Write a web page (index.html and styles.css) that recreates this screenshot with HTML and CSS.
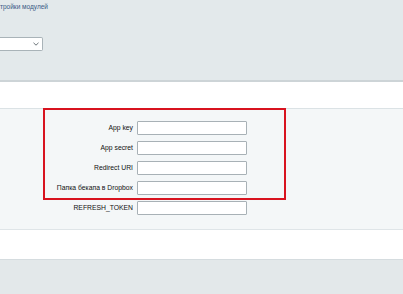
FILE: index.html
```html
<!DOCTYPE html>
<html lang="ru">
<head>
    <meta charset="UTF-8">
    <title>Настройки модулей</title>
    <link rel="stylesheet" href="styles.css">
</head>
<body>
    <div class="top">
        <a href="#" class="crumb">тройки модулей</a>
        <div class="select-box">
            <svg class="arrow" width="6" height="4" viewBox="0 0 6 4"><path d="M0.5 0.8 L3 3.2 L5.5 0.8" fill="none" stroke="#6b7479" stroke-width="1"/></svg>
        </div>
    </div>

    <div class="gap-band"></div>

    <section class="settings">
        <div class="highlight"></div>
        <div class="row">
            <label>App key</label>
            <input type="text">
        </div>
        <div class="row">
            <label>App secret</label>
            <input type="text">
        </div>
        <div class="row">
            <label>Redirect URI</label>
            <input type="text">
        </div>
        <div class="row">
            <label>Папка бекапа в Dropbox</label>
            <input type="text">
        </div>
        <div class="row">
            <label>REFRESH_TOKEN</label>
            <input type="text">
        </div>
    </section>

    <div class="gap-band bottom-band"></div>

    <footer></footer>
</body>
</html>
```

FILE: styles.css
```css
* { margin: 0; padding: 0; box-sizing: border-box; }
body {
    font-family: "Liberation Sans", Arial, sans-serif;
    background: #e3e8ea;
    width: 403px;
    height: 294px;
    overflow: hidden;
}
.top {
    height: 82px;
    background: #e3e9eb;
    border-bottom: 2px solid #cdd4d7;
    padding-top: 3px;
}
.crumb {
    display: block;
    font-size: 6.5px;
    color: #3a5a85;
    text-decoration: none;
    line-height: 8px;
}
.select-box {
    margin-top: 26px;
    width: 43px;
    height: 14px;
    background: #fff;
    border: 1px solid #a9b3b8;
    border-left: none;
    border-radius: 0 2px 2px 0;
    display: flex;
    justify-content: flex-end;
    align-items: center;
    padding-right: 3px;
}
.gap-band {
    height: 26px;
    background: #fff;
}
.settings {
    position: relative;
    background: #f4f7f8;
    border-top: 1px solid #dbe2e5;
    border-bottom: 1px solid #dfe5e8;
    padding: 12px 0 14px;
    display: flex;
    flex-direction: column;
    gap: 6px;
}
.row {
    display: grid;
    grid-template-columns: 133px 110px;
    column-gap: 4px;
    align-items: center;
}
.row label {
    text-align: right;
    font-size: 6.8px;
    color: #111;
    line-height: 10px;
}
.row input {
    height: 14px;
    border: 1px solid #a8b1b6;
    border-radius: 1px;
    background: #fff;
}
.highlight {
    position: absolute;
    left: 43px;
    top: -1px;
    width: 243px;
    height: 92px;
    border: 2.5px solid #d8131f;
}
.bottom-band {
    height: 29px;
}
footer {
    height: 36px;
    border-top: 1px solid #d5dcdf;
    background: #e3e8ea;
}
```
